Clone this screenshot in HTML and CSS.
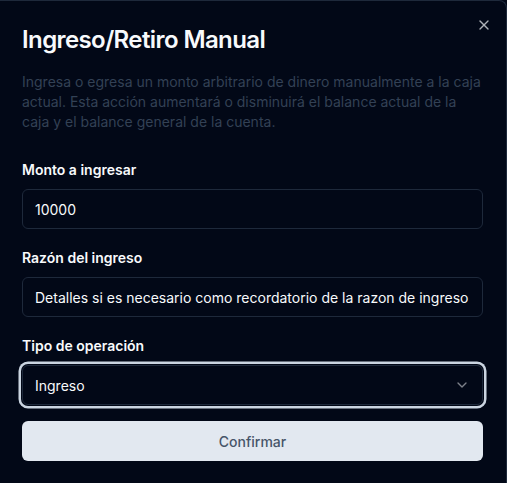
FILE: index.html
```html
<!DOCTYPE html>
<html lang="es">
<head>
<meta charset="utf-8">
<title>Ingreso/Retiro Manual</title>
<link rel="stylesheet" href="styles.css">
</head>
<body>
<div class="dialog">
  <button class="close" type="button" aria-label="Cerrar">
    <svg width="16" height="16" viewBox="0 0 24 24" fill="none" stroke="currentColor" stroke-width="2" stroke-linecap="round" stroke-linejoin="round"><path d="M18 6 6 18"/><path d="m6 6 12 12"/></svg>
  </button>
  <h2 class="title">Ingreso/Retiro Manual</h2>
  <p class="desc">Ingresa o egresa un monto arbitrario de dinero manualmente a la caja actual. Esta acción aumentará o disminuirá el balance actual de la caja y el balance general de la cuenta.</p>
  <form class="form">
    <div class="field">
      <label class="label" for="monto">Monto a ingresar</label>
      <input class="input" id="monto" type="text" value="10000">
    </div>
    <div class="field">
      <label class="label" for="razon">Razón del ingreso</label>
      <input class="input" id="razon" type="text" value="Detalles si es necesario como recordatorio de la razon de ingreso">
    </div>
    <div class="field">
      <label class="label" for="tipo">Tipo de operación</label>
      <button class="select" id="tipo" type="button">
        <span>Ingreso</span>
        <svg class="chev" width="16" height="16" viewBox="0 0 24 24" fill="none" stroke="currentColor" stroke-width="2" stroke-linecap="round" stroke-linejoin="round"><path d="m6 9 6 6 6-6"/></svg>
      </button>
    </div>
    <button class="submit" type="submit" disabled>Confirmar</button>
  </form>
</div>
</body>
</html>
```

FILE: styles.css
```css
* { box-sizing: border-box; }
html, body {
  margin: 0;
  padding: 0;
  background: #020817;
}
body {
  font-family: Inter, "Noto Sans", sans-serif;
  color: #f8fafc;
  width: 507px;
  height: 483px;
  overflow: hidden;
}
.dialog {
  position: relative;
  width: 507px;
  min-height: 490px;
  background: #020817;
  border-top: 1px solid #1e293b;
  border-right: 1px solid #1e293b;
  border-top-right-radius: 8px;
  padding: 23px 23px 24px 22px;
}
.close {
  position: absolute;
  top: 16px;
  right: 14px;
  width: 16px;
  height: 16px;
  padding: 0;
  border: 0;
  background: none;
  color: #f8fafc;
  opacity: 0.7;
  display: flex;
}
.title {
  margin: 0;
  font-size: 24px;
  line-height: 32px;
  font-weight: 600;
  letter-spacing: -0.6px;
  color: #f8fafc;
}
.desc {
  margin: 16px 0 0;
  font-size: 14px;
  line-height: 20px;
  color: #334155;
}
.form {
  margin-top: 28px;
  display: flex;
  flex-direction: column;
}
.field {
  display: flex;
  flex-direction: column;
  margin-bottom: 19px;
}
.field:nth-child(3) { margin-bottom: 16px; }
.label {
  font-size: 14px;
  line-height: 20px;
  font-weight: 600;
  color: #f8fafc;
  margin-bottom: 9px;
}
.input, .select {
  width: 461px;
  height: 40px;
  border: 1px solid #1e293b;
  border-radius: 6px;
  background: #020817;
  color: #f8fafc;
  font-family: inherit;
  font-size: 14px;
  padding: 0 12px;
  outline: none;
}
.select {
  display: flex;
  align-items: center;
  justify-content: space-between;
  text-align: left;
  box-shadow: 0 0 0 1px #020817, 0 0 0 3.5px #cbd5e1;
}
.chev { opacity: 0.5; }
.submit {
  width: 461px;
  height: 40px;
  border: 0;
  border-radius: 6px;
  background: #e2e8f0;
  color: #475569;
  font-family: inherit;
  font-size: 14px;
  font-weight: 500;
}
```
